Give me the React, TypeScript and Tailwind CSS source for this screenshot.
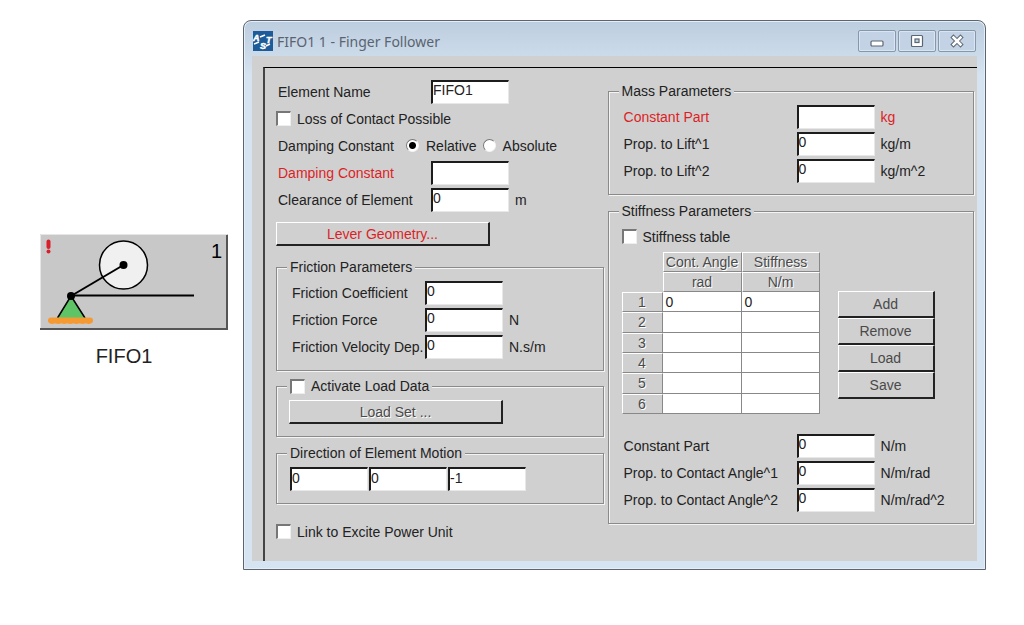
import type { ReactNode } from "react"
import clsx from "clsx"

const massFields = [
  { id: "mass-const", label: "Constant Part", value: "", unit: "kg", required: true },
  { id: "mass-lift1", label: "Prop. to Lift^1", value: "0", unit: "kg/m" },
  { id: "mass-lift2", label: "Prop. to Lift^2", value: "0", unit: "kg/m^2" },
]

const stiffnessFields = [
  { id: "stiff-const", label: "Constant Part", value: "0", unit: "N/m" },
  { id: "stiff-angle1", label: "Prop. to Contact Angle^1", value: "0", unit: "N/m/rad" },
  { id: "stiff-angle2", label: "Prop. to Contact Angle^2", value: "0", unit: "N/m/rad^2" },
]

const frictionFields = [
  { id: "friction-coeff", label: "Friction Coefficient", value: "0" },
  { id: "friction-force", label: "Friction Force", value: "0", unit: "N" },
  { id: "friction-velocity", label: "Friction Velocity Dep.", value: "0", unit: "N.s/m" },
]

const tableRows = [["0", "0"], ["", ""], ["", ""], ["", ""], ["", ""], ["", ""]]

const TextBox = ({ id, value, label }: { id?: string; value: string; label?: string }) => (
  <input
    id={id}
    type="text"
    aria-label={label}
    defaultValue={value}
    className="w-[78px] h-6 shrink-0 bg-white border-t-2 border-l-2 border-r border-b border-t-[#1c1c1c] border-l-[#1c1c1c] border-r-[#e8e8e8] border-b-[#e8e8e8] pb-1 text-sm leading-4 text-[#222] outline-none"
  />
)

type FieldProps = {
  id: string
  label: string
  value: string
  unit?: string
  required?: boolean
  labelClass: string
}

const Field = ({ id, label, value, unit, required, labelClass }: FieldProps) => (
  <div className={clsx("flex items-center h-[27px]", required && "text-[#dc1f26]")}>
    <label htmlFor={id} className={clsx("shrink-0 whitespace-nowrap", labelClass)}>{label}</label>
    <TextBox id={id} value={value} />
    {unit && <span className="ml-[6px]">{unit}</span>}
  </div>
)

const CheckBox = ({ label }: { label: string }) => (
  <label className="flex items-center gap-[6px]">
    <input
      type="checkbox"
      className="appearance-none w-[15px] h-[15px] bg-white border-t-2 border-l-2 border-r border-b border-t-[#777] border-l-[#777] border-r-[#eee] border-b-[#eee] checked:bg-[#333]"
    />
    {label}
  </label>
)

const Radio = ({ label, checked }: { label: string; checked?: boolean }) => (
  <label className="flex items-center gap-[7px]">
    <input
      type="radio"
      name="damping"
      defaultChecked={checked}
      className="appearance-none w-[13px] h-[13px] rounded-full bg-white border border-t-[#777] border-l-[#777] border-r-[#f4f4f4] border-b-[#f4f4f4] checked:bg-[radial-gradient(circle,#000_3px,#fff_4px)]"
    />
    {label}
  </label>
)

const PushButton = ({ children, className }: { children: ReactNode; className: string }) => (
  <button
    type="button"
    className={clsx("bg-[#d0d0d0] border-t border-l border-r-2 border-b-2 border-t-white border-l-white border-r-[#222] border-b-[#222] text-center", className)}
  >
    {children}
  </button>
)

const disabledText = "text-[#4a4a4a] [text-shadow:1px_1px_0_#fff]"

// etched frame with its title sitting on the top line
const Group = ({ title, className, children }: { title: ReactNode; className: string; children: ReactNode }) => (
  <fieldset className={clsx("min-w-0 border border-[#8a8a8a] shadow-[1px_1px_0_#f4f4f4,inset_1px_1px_0_#f4f4f4]", className)}>
    <legend className="h-5 ml-[10px] px-[3px] flex items-center bg-[#d0d0d0]">{title}</legend>
    {children}
  </fieldset>
)

const headCell = "border border-t-white border-l-white border-r-[#888] border-b-[#888] font-normal p-0 leading-4"

const StiffnessTable = () => (
  <table className="w-[198px] h-[162px] table-fixed border-separate border-spacing-0 shrink-0">
    <colgroup>
      <col className="w-[41px]" />
      <col className="w-[79px]" />
      <col className="w-[78px]" />
    </colgroup>
    <thead className={disabledText}>
      <tr className="h-5">
        <td />
        <th className={clsx(headCell, "whitespace-nowrap")}>Cont. Angle</th>
        <th className={headCell}>Stiffness</th>
      </tr>
      <tr className="h-5">
        <td />
        <th className={headCell}>rad</th>
        <th className={headCell}>N/m</th>
      </tr>
    </thead>
    <tbody>
      {tableRows.map((row, i) => (
        <tr key={i}>
          <th className={clsx(headCell, disabledText)}>{i + 1}</th>
          {row.map((cell, j) => (
            <td key={j} className="bg-white border-r border-b border-[#888] p-0 pl-[3px] leading-4">{cell}</td>
          ))}
        </tr>
      ))}
    </tbody>
  </table>
)

const FollowerNode = () => (
  <div className="w-[188px] shrink-0 mt-[214px]">
    <svg viewBox="0 0 188 96" className="block w-full" fontFamily="Liberation Sans, Arial, sans-serif">
      <rect width="188" height="96" fill="#c8c8c8" />
      <path d="M0.5 95V0.5H187" fill="none" stroke="#e6e6e6" />
      <path d="M0 95H187V1" fill="none" stroke="#555" strokeWidth="2" />
      <path d="M8.5 7.500V13" stroke="#d9202a" strokeWidth="4" strokeLinecap="round" />
      <circle cx="8.500" cy="17.500" r="2" fill="#d9202a" />
      <circle cx="83.500" cy="31" r="24" fill="#f0f0f0" stroke="#000" strokeWidth="1.500" />
      <path d="M31 62L17.500 84H45.500Z" fill="#5fc465" />
      <path d="M17.500 84L31 62L45 84" fill="none" stroke="#000" strokeWidth="1.500" />
      <path d="M83.500 31L31 62" fill="none" stroke="#000" strokeWidth="2" />
      <path d="M31 61.500H154" fill="none" stroke="#000" strokeWidth="2" />
      <circle cx="83.500" cy="31" r="4" />
      <circle cx="31" cy="62" r="4" />
      <path d="M11 86.500H50" stroke="#f59a32" strokeWidth="6" strokeLinecap="round" />
      <path d="M12 88H50" stroke="#f59a32" strokeWidth="4" strokeLinecap="round" strokeDasharray="0.100 6" />
      <text x="171" y="24" fontSize="20">1</text>
    </svg>
    <div className="mt-3 pr-5 text-center text-xl leading-7 text-[#222]">FIFO1</div>
  </div>
)

const AppLogo = () => (
  <svg viewBox="0 0 20 20" className="w-5 h-5 shrink-0" fontFamily="Liberation Sans, Arial, sans-serif" fontWeight="bold" fontStyle="italic" fontSize="9" fill="#fff" stroke="#fff" strokeWidth="0.500">
    <rect width="20" height="20" fill="#1d5c98" stroke="none" />
    <text x="0" y="10">A</text>
    <text x="7" y="18">S</text>
    <text x="13" y="12">T</text>
    <path d="M1 13L6 11M13 15L17 13M7 6L12 4" fill="none" strokeWidth="1.500" />
  </svg>
)

const captionButton = "w-[38px] h-[22px] flex items-center justify-center border border-[#8797ab] rounded-[2px] bg-[#c3d3e5] shadow-[inset_0_0_0_1px_#d9e5f1]"

const TitleBar = () => (
  <header className="h-[35px] flex items-center pl-[9px] pr-[9px] pt-1">
    <AppLogo />
    <h1 className="ml-1 pt-[2px] font-['Noto_Sans',sans-serif] text-sm text-[#5a6470]">FIFO1 1 - Finger Follower</h1>
    <div className="ml-auto flex gap-[2px]">
      <button type="button" aria-label="Minimize" className={captionButton}>
        <svg width="14" height="14" viewBox="0 0 14 14">
          <rect x="1" y="7" width="12" height="5" rx="1" fill="#fff" stroke="#5c6672" strokeWidth="1.200" />
        </svg>
      </button>
      <button type="button" aria-label="Maximize" className={captionButton}>
        <svg width="14" height="14" viewBox="0 0 14 14" fill="#fff" stroke="#5c6672" strokeWidth="1.200">
          <rect x="1.500" y="1.500" width="11" height="11" rx="1" />
          <rect x="5" y="5" width="4" height="3.500" fill="#c3d3e5" />
        </svg>
      </button>
      <button type="button" aria-label="Close" className={captionButton}>
        <svg width="14" height="14" viewBox="0 0 14 14" fill="none" strokeLinecap="square">
          <path d="M3.500 3.500L10.500 10.500M10.500 3.500L3.500 10.500" stroke="#5c6672" strokeWidth="4.500" />
          <path d="M3.500 3.500L10.500 10.500M10.500 3.500L3.500 10.500" stroke="#fff" strokeWidth="2.500" />
        </svg>
      </button>
    </div>
  </header>
)

const GeneralColumn = () => (
  <div>
    <div className="pl-[2px]">
      <Field id="name" label="Element Name" value="FIFO1" labelClass="w-[153px]" />
    </div>
    <div className="h-[27px] flex items-center">
      <CheckBox label="Loss of Contact Possible" />
    </div>
    <div role="radiogroup" aria-label="Damping Constant" className="h-[27px] flex items-center pl-[2px]">
      <span className="w-32 shrink-0">Damping Constant</span>
      <div className="flex gap-[6px]">
        <Radio label="Relative" checked />
        <Radio label="Absolute" />
      </div>
    </div>
    <div className="pl-[2px]">
      <Field id="damping-value" label="Damping Constant" value="" required labelClass="w-[153px]" />
      <Field id="clearance" label="Clearance of Element" value="0" unit="m" labelClass="w-[153px]" />
    </div>
    <PushButton className="block w-[214px] h-6 mt-[9px] text-[#dc1f26]">Lever Geometry...</PushButton>

    <Group title="Friction Parameters" className="mt-[11px] pb-[10px]">
      <div className="pt-[2px] pl-[15px]">
        {frictionFields.map((f) => (
          <Field key={f.id} {...f} labelClass="w-[133px]" />
        ))}
      </div>
    </Group>

    <Group title={<CheckBox label="Activate Load Data" />} className="mt-[5px] pb-3">
      <PushButton className={clsx("block w-[214px] h-6 mt-1 ml-3", disabledText)}>Load Set ...</PushButton>
    </Group>

    <Group title="Direction of Element Motion" className="mt-[6px] pb-3">
      <div className="flex gap-px pt-1 pl-[13px]">
        <TextBox value="0" label="Direction x" />
        <TextBox value="0" label="Direction y" />
        <TextBox value="-1" label="Direction z" />
      </div>
    </Group>

    <div className="h-[27px] flex items-center mt-[14px]">
      <CheckBox label="Link to Excite Power Unit" />
    </div>
  </div>
)

const ParameterColumn = () => (
  <div className="pt-[3px]">
    <Group title="Mass Parameters" className="pb-[10px]">
      <div className="pt-[2px] pl-[15px]">
        {massFields.map((f) => (
          <Field key={f.id} {...f} labelClass="w-[173px]" />
        ))}
      </div>
    </Group>

    <Group title="Stiffness Parameters" className="mt-[6px] pb-[10px]">
      <div className="pl-[13px]">
        <div className="h-[27px] flex items-center mt-[2px]">
          <CheckBox label="Stiffness table" />
        </div>
        <div className="flex mt-[2px] gap-[18px]">
          <StiffnessTable />
          <div className={clsx("flex flex-col w-[97px] mt-[39px]", disabledText)}>
            <PushButton className="h-[27px]">Add</PushButton>
            <PushButton className="h-[27px]">Remove</PushButton>
            <PushButton className="h-[27px]">Load</PushButton>
            <PushButton className="h-[27px]">Save</PushButton>
          </div>
        </div>
      </div>
      <div className="mt-[18px] pl-[15px]">
        {stiffnessFields.map((f) => (
          <Field key={f.id} {...f} labelClass="w-[173px]" />
        ))}
      </div>
    </Group>
  </div>
)

export default function App() {
  return (
    <main className="min-h-screen flex items-start gap-[15px] bg-white pt-5 pl-10 pr-[38px] pb-10 font-['Liberation_Sans',Arial,sans-serif] text-sm text-[#222]">
      <FollowerNode />
      <section className="flex-1 rounded-t-lg border border-[#5d6670] bg-linear-to-b from-[#bccddf] to-[#d6e3f0] to-10% px-2 pb-2 shadow-[inset_0_0_0_1px_#e4eef8]">
        <div className="-mx-2">
          <TitleBar />
        </div>
        <div className="bg-[#d0d0d0] pt-[11px] pl-[11px]">
          <div className="border-t border-l-2 border-t-black border-l-[#444] pt-[10px] pl-[11px] pr-[3px] pb-4 grid grid-cols-[328fr_367fr] gap-1">
            <GeneralColumn />
            <ParameterColumn />
          </div>
        </div>
      </section>
    </main>
  )
}
